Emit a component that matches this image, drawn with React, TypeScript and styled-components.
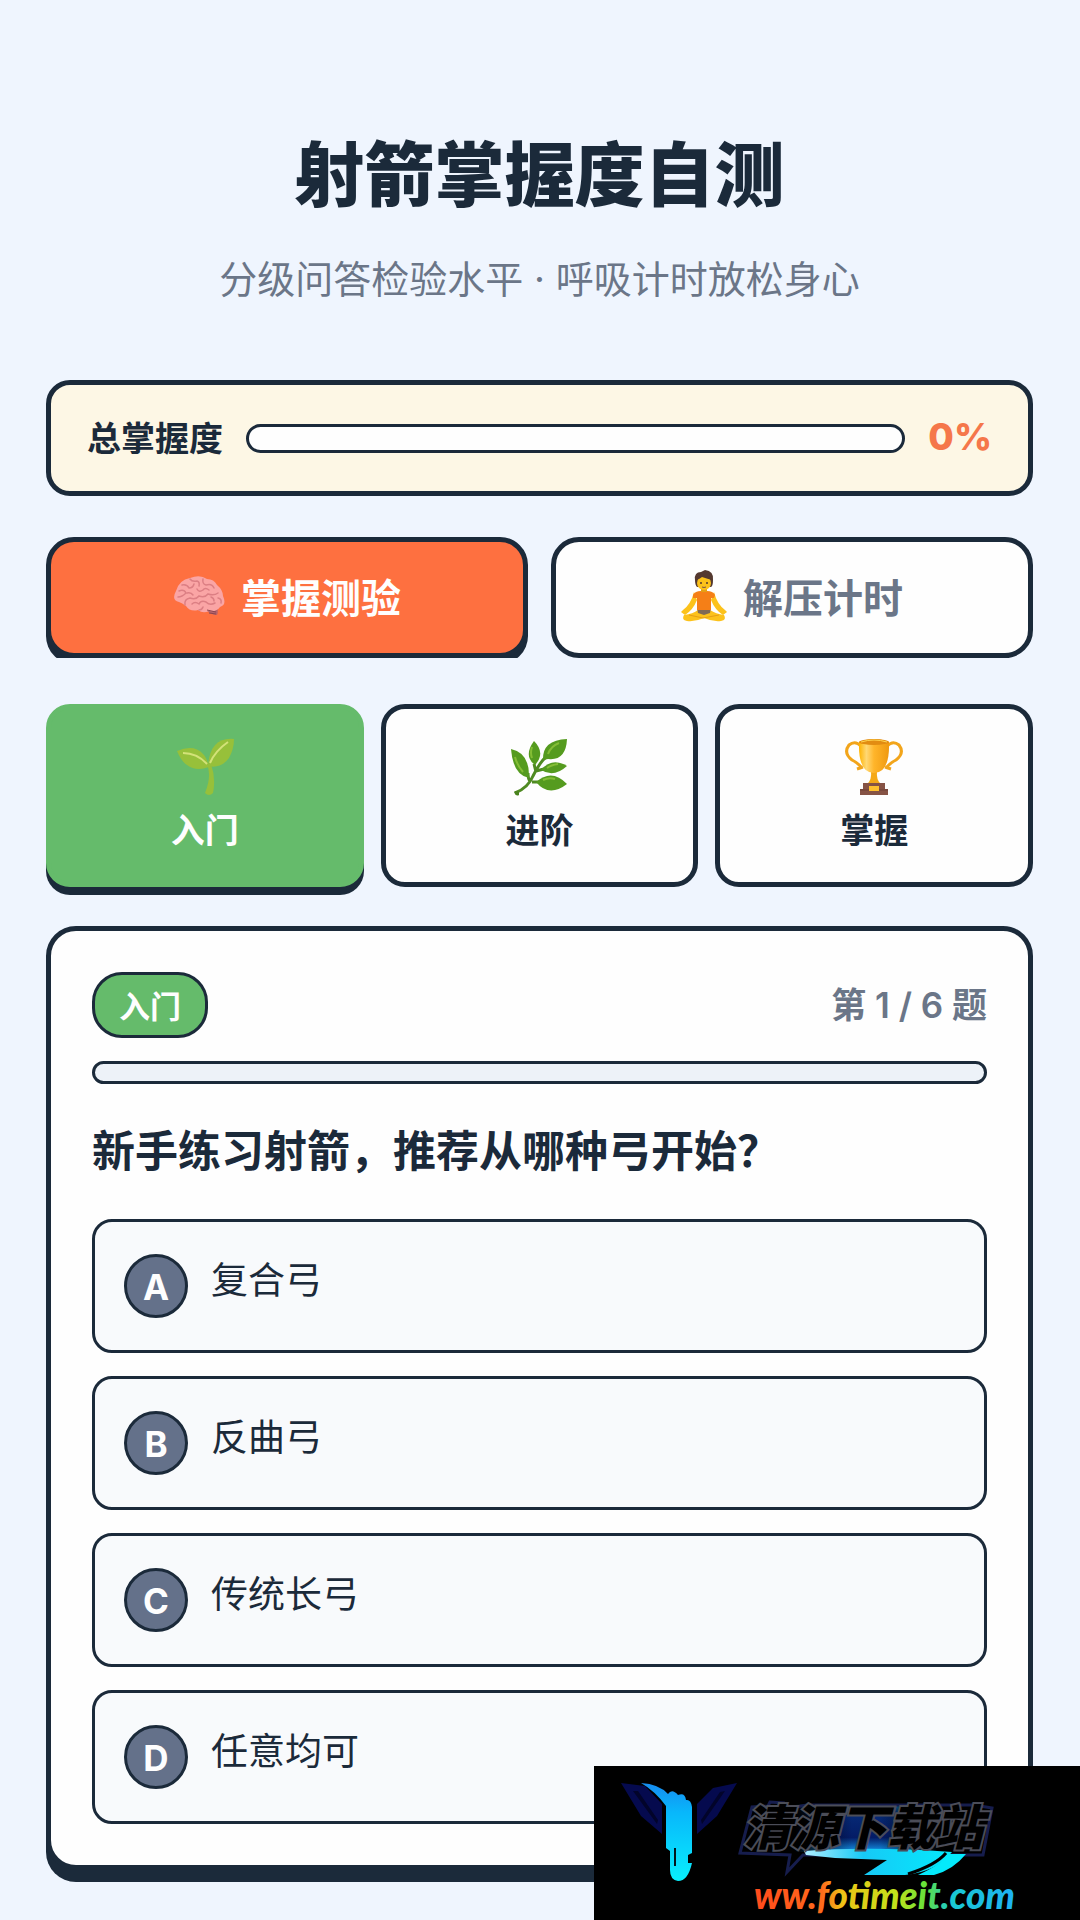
import React, { useState } from "react";
import styled, { createGlobalStyle } from "styled-components";

const LEVELS = [
  { id: "easy", name: "入门", icon: "sprout" },
  { id: "mid", name: "进阶", icon: "herb" },
  { id: "pro", name: "掌握", icon: "trophy" },
];

const OPTIONS = ["复合弓", "反曲弓", "传统长弓", "任意均可"];

function Brain() {
  return (
    <svg width="52" height="40" viewBox="0 0 52 40" aria-hidden="true">
      <path d="M31 31 Q36 39 44 39 Q46 34 43 30 Z" fill="#b5636a" />
      <path d="M3 15 Q6 4 17 2 Q27 -2 34 3 Q41 3 44 9 Q50 14 50 20 Q54 29 47 31 Q44 36 36 35 Q30 38 25 34 Q17 36 13 30 Q9 27 6 26 Q-2 24 3 15 Z" fill="#faa5a5" />
      <g fill="none" stroke="#dc7f84" strokeWidth="1.5" strokeLinecap="round">
        <path d="M6 15 Q11 13 13 17 Q9 21 5 21" />
        <path d="M9 9 Q14 8 16 12 Q20 12 21 8 M17 3 Q19 6 24 5 Q27 6 26 10" />
        <path d="M12 29 Q11 23 17 22 Q23 24 26 20 Q32 22 35 18 Q41 20 45 17" />
        <path d="M30 3 Q29 8 33 9 Q39 7 41 12 M24 13 Q26 17 30 14 Q32 11 36 14" />
        <path d="M19 28 Q22 25 26 28 Q28 24 33 26 Q37 30 42 27 M38 21 Q41 22 41 25" />
        <path d="M14 17 Q18 16 20 19 M45 22 Q49 23 48 27 M26 34 Q29 34 30 31" />
      </g>
      <path d="M34 34 L43 36 M36 37 L43 38" stroke="#8a4651" strokeWidth="1" />
    </svg>
  );
}

function Meditate() {
  return (
    <svg width="46" height="52" viewBox="0 0 46 52" aria-hidden="true">
      <path d="M13 22 Q10 34 2 40 L0 42 L4 45 Q12 40 16 30 Z" fill="#fcc21b" />
      <path d="M33 22 Q36 34 44 40 L46 42 L42 45 Q34 40 30 30 Z" fill="#fcc21b" />
      <path d="M3 45 Q12 44 17 40 L29 40 Q35 44 43 45 Q46 50 40 51 Q32 52 23 48 Q14 52 6 51 Q0 50 3 45 Z" fill="#fcc21b" />
      <path d="M8 45 L22 48 L38 45" fill="none" stroke="#e59f14" strokeWidth="1" />
      <path d="M16 38 L30 38 L29 43 L23 45 L17 43 Z" fill="#806a55" />
      <path d="M12 25 Q14 21 20 21 L26 21 Q32 21 34 25 L33 28 L30 28 L30 40 L16 40 L16 28 L12 28 Z" fill="#f57f17" />
      <rect x="20" y="17" width="6" height="5" fill="#e59f14" />
      <path d="M14 10 Q13 2 20 2 L24 0 Q33 1 32 10 Q32 16 30 17 L16 17 Q14 15 14 10 Z" fill="#543930" />
      <ellipse cx="23" cy="13" rx="7" ry="7" fill="#fcc21b" />
      <path d="M15 10 Q19 9 21 7 Q27 9 31 10 L28 4 L18 4 Z" fill="#543930" />
      <circle cx="20" cy="13" r="1" fill="#543930" />
      <circle cx="26" cy="13" r="1" fill="#543930" />
      <path d="M21 17 Q23 18 25 17" stroke="#795548" strokeWidth="1" fill="none" />
    </svg>
  );
}

function LevelIcon({ name }: { name: string }) {
  if (name === "sprout") {
    return (
      <svg width="58" height="58" viewBox="0 0 58 58" aria-hidden="true">
        <path d="M31 26 Q36 38 29 55 Q33 59 37 55 Q40 40 35 26 Z" fill="#97c03a" />
        <path d="M1 13 Q18 6 27 16 Q31 20 33 29 Q20 34 11 27 Q5 23 1 13 Z" fill="#97c03a" />
        <path d="M58 1 Q34 -1 32 28 Q45 31 53 20 Q58 11 58 1 Z" fill="#97c03a" />
        <path d="M7 15 Q21 15 31 26 M34 25 Q39 13 52 4" fill="none" stroke="#d3e278" strokeWidth="2" />
      </svg>
    );
  }
  if (name === "herb") {
    return (
      <svg width="58" height="58" viewBox="0 0 58 58" aria-hidden="true">
        <path d="M5 55 Q18 50 23 38 Q30 24 36 19 M20 43 Q18 41 18 35 M24 26 L26 34 M26 33 L34 31 M22 44 L29 44" fill="none" stroke="#4f8a22" strokeWidth="3" />
        <path d="M4 54 Q6 52 9 54 L9 57 Q6 59 4 54 Z" fill="#4a831e" />
        <g fill="#559b1f">
          <path d="M1 11 Q20 15 19 40 Q3 37 1 11 Z" />
          <path d="M24 3 Q36 15 25 27 Q13 18 24 3 Z" />
          <path d="M57 1 Q56 23 38 21 L33 22 Q32 2 57 1 Z" />
          <path d="M57 28 Q44 40 31 32 Q42 19 57 28 Z" />
          <path d="M57 46 Q39 60 26 44 Q42 30 57 46 Z" />
        </g>
        <path d="M5 19 Q7 27 13 34 M22 9 Q20 15 22 20 M49 5 Q41 8 38 16 M48 26 Q41 27 37 30 M45 41 Q39 39 33 42" fill="none" stroke="#84bd35" strokeWidth="2" />
      </svg>
    );
  }
  return (
    <svg width="58" height="58" viewBox="0 0 58 58" aria-hidden="true">
      <defs>
        <linearGradient id="cup" x1="0" x2="1" y1="0" y2="0">
          <stop offset="0" stopColor="#ffb300" />
          <stop offset="0.25" stopColor="#ffd874" />
          <stop offset="0.5" stopColor="#ffb52a" />
          <stop offset="1" stopColor="#ef9910" />
        </linearGradient>
      </defs>
      <path d="M16 8 Q10 2 4 7 Q-2 15 7 22 Q15 26 17 31 M42 8 Q48 2 54 7 Q60 15 51 22 Q43 26 41 31 M12 31 L18 29 M46 31 L40 29" fill="none" stroke="#f2a51b" strokeWidth="3" />
      <path d="M26 33 L32 33 Q31 42 36 46 L22 46 Q27 42 26 33 Z" fill="#f5a918" />
      <path d="M14 4 Q29 -2 44 4 Q45 35 29 35 Q13 35 14 4 Z" fill="url(#cup)" />
      <ellipse cx="29" cy="4" rx="15" ry="3" fill="#e28c12" />
      <path d="M16 4 Q29 0 42 4" stroke="#ffd54f" strokeWidth="1" fill="none" />
      <path d="M18 45 H40 V51 H43 V57 H15 V51 H18 Z" fill="#865345" />
      <path d="M15 52 H43" stroke="#6d4037" strokeWidth="1" />
      <rect x="24" y="48" width="10" height="5" fill="#ffc02d" />
    </svg>
  );
}

function SiteMark() {
  return (
    <Mark>
      <svg width="116" height="100" viewBox="0 0 116 100" aria-hidden="true">
        <defs>
          <linearGradient id="beam" x1="0" x2="0" y1="0" y2="1">
            <stop offset="0" stopColor="#168bf0" />
            <stop offset="0.3" stopColor="#08b7fb" />
            <stop offset="1" stopColor="#08effd" />
          </linearGradient>
        </defs>
        <path d="M0 1 L24 4 L41 22 V52 L20 34 Z M116 1 L92 6 L76 22 V52 L96 34 Z" fill="#050a4e" />
        <path d="M12 9 L17 9 L37 38 L36 42 Z M104 9 L99 10 L80 38 L81 42 Z" fill="#02042a" />
        <path d="M20 1 Q38 2 47 12 Q51 6 57 13 Q64 10 65 18 Q70 17 71 25 V71 L67 73 V81 H71 Q67 99 57 99 Q49 98 49 88 V69 L45 66 V24 Q34 9 20 1 Z" fill="url(#beam)" />
        <path d="M54 66 V84" stroke="#02151d" strokeWidth="2" />
      </svg>
      <MarkText width="300" height="138" viewBox="0 0 300 138" role="img" aria-label="清源下载站">
        <defs>
          <linearGradient id="glow" x1="0" x2="0" y1="0" y2="1">
            <stop offset="0" stopColor="#0e86b4" />
            <stop offset="0.2" stopColor="#062a76" />
            <stop offset="0.7" stopColor="#041c66" />
            <stop offset="1" stopColor="#1496ea" />
          </linearGradient>
          <linearGradient id="fade" x1="0" x2="1" y1="0" y2="0">
            <stop offset="0" stopColor="#000" stopOpacity="1" />
            <stop offset="0.4" stopColor="#000" stopOpacity="0" />
            <stop offset="0.6" stopColor="#000" stopOpacity="0" />
            <stop offset="1" stopColor="#000" stopOpacity="1" />
          </linearGradient>
          <linearGradient id="swoosh" x1="0" x2="1" y1="0" y2="0">
            <stop offset="0" stopColor="#b0efff" />
            <stop offset="0.4" stopColor="#17c9f6" />
            <stop offset="1" stopColor="#04eafc" />
          </linearGradient>
          <linearGradient id="rainbow" x1="0" x2="1" y1="0" y2="0">
            <stop offset="0" stopColor="#ff4a1c" />
            <stop offset="0.26" stopColor="#ff6a1c" />
            <stop offset="0.34" stopColor="#f0c416" />
            <stop offset="0.55" stopColor="#bfe31c" />
            <stop offset="0.66" stopColor="#63e23c" />
            <stop offset="0.75" stopColor="#19c9d2" />
            <stop offset="1" stopColor="#1eb1f5" />
          </linearGradient>
        </defs>
        <rect x="56" y="22" width="140" height="48" fill="url(#glow)" />
        <rect x="55" y="21" width="142" height="50" fill="url(#fade)" />
        <path d="M0 71 L12 25 L28 24 L30 20 L44 21 L50 26 L67 23 H234 L252 26 L243 73 H63 L47 90 L50 73 Z" fill="none" stroke="#161d4d" strokeWidth="3" />
        <path d="M64 69 Q130 64 212 70 Q196 90 165 93 H124 L147 78 L95 76 L66 73 Z" fill="url(#swoosh)" />
        <path d="M178 93 Q202 82 208 72 L226 72 Q213 88 194 93 Z" fill="#04eafc" />
        <path d="M168 92 Q196 83 206 71" fill="none" stroke="#000" strokeWidth="3" />
        <MarkName x="3" y="63">清源下载站</MarkName>
        <MarkUrl x="14" y="127">ww.fotimeit.com</MarkUrl>
      </MarkText>
    </Mark>
  );
}

function App() {
  const [tab, setTab] = useState("quiz");
  const [level, setLevel] = useState("easy");

  return (
    <>
      <GlobalStyle />
      <Page>
        <Header>
          <h1>射箭掌握度自测</h1>
          <p>分级问答检验水平 · 呼吸计时放松身心</p>
        </Header>

        <Score>
          <ScoreLabel>总掌握度</ScoreLabel>
          <ScoreBar />
          <ScoreValue>0%</ScoreValue>
        </Score>

        <Tabs>
          <Tab type="button" $active={tab === "quiz"} onClick={() => setTab("quiz")}>
            <Brain />
            掌握测验
          </Tab>
          <Tab type="button" $active={tab === "timer"} onClick={() => setTab("timer")}>
            <Meditate />
            解压计时
          </Tab>
        </Tabs>

        <Levels>
          {LEVELS.map((l) => (
            <Level type="button" key={l.id} $active={level === l.id} onClick={() => setLevel(l.id)}>
              <LevelIcon name={l.icon} />
              {l.name}
            </Level>
          ))}
        </Levels>

        <Card>
          <CardTop>
            <Badge>入门</Badge>
            <Count>第 1 / 6 题</Count>
          </CardTop>
          <QuizBar />
          <Question>新手练习射箭，推荐从哪种弓开始？</Question>
          <Options>
            {OPTIONS.map((text, i) => (
              <Option type="button" key={text}>
                <Letter>{"ABCD"[i]}</Letter>
                <span>{text}</span>
              </Option>
            ))}
          </Options>
        </Card>
      </Page>
      <SiteMark />
    </>
  );
}

export default App;

const GlobalStyle = createGlobalStyle`
* {
    box-sizing: border-box;
}
body {
    margin: 0;
    background: #eff5fe;
    color: #1b2a3a;
    font-family: "Noto Sans CJK SC", sans-serif;
}
button {
    font-family: inherit;
    color: inherit;
    cursor: pointer;
}
`;

const Page = styled.main`
    padding: 119px 47px 39px 46px;
`;

const Header = styled.header`
    text-align: center;
    margin-bottom: 74px;
    h1 {
        margin: 0 0 30px;
        font-size: 70px;
        line-height: 104px;
        font-weight: 900;
    }
    p {
        margin: 0;
        font-family: Inter, "Noto Sans CJK SC", sans-serif;
        font-size: 38px;
        line-height: 53px;
        color: #6b7688;
    }
`;

const Score = styled.section`
    display: flex;
    align-items: center;
    gap: 23px;
    height: 116px;
    padding: 0 36px;
    margin-bottom: 41px;
    border: 5px solid #1b2a3a;
    border-radius: 24px;
    background: #fdf7e5;
`;

const ScoreLabel = styled.span`
    padding-bottom: 3px;
    font-size: 34px;
    line-height: 50px;
    font-weight: 700;
`;

const ScoreBar = styled.div`
    flex: 1;
    height: 29px;
    border: 3px solid #1b2a3a;
    border-radius: 15px;
    background: #fefefe;
`;

const ScoreValue = styled.span`
    padding-bottom: 3px;
    font-family: Inter, sans-serif;
    font-size: 37px;
    line-height: 50px;
    font-weight: 800;
    color: #f5774a;
`;

/* overflow cuts the shadow of the active tab */
const Tabs = styled.nav`
    display: grid;
    grid-template-columns: 1fr 1fr;
    gap: 23px;
    margin-bottom: 46px;
    overflow: hidden;
`;

const Tab = styled.button<{ $active: boolean }>`
    display: flex;
    align-items: center;
    justify-content: center;
    gap: 16px;
    height: 121px;
    padding: 0 0 4px;
    border: 5px solid #1b2a3a;
    border-radius: 28px;
    font-size: 40px;
    font-weight: 700;
    background: ${(p) => (p.$active ? "#fe7040" : "#fefefe")};
    color: ${(p) => (p.$active ? "#fefefe" : "#6b7688")};
    box-shadow: ${(p) => (p.$active ? "0 6px 0 #1b2a3a" : "none")};
`;

const Levels = styled.div`
    display: grid;
    grid-template-columns: repeat(3, 1fr);
    gap: 17px;
    margin-bottom: 39px;
`;

const Level = styled.button<{ $active: boolean }>`
    display: flex;
    flex-direction: column;
    align-items: center;
    gap: 8px;
    height: 183px;
    padding: 29px 0 0;
    border: 5px solid ${(p) => (p.$active ? "#65bb6b" : "#1b2a3a")};
    border-radius: 24px;
    font-size: 34px;
    line-height: 50px;
    font-weight: 700;
    background: ${(p) => (p.$active ? "#65bb6b" : "#fefefe")};
    color: ${(p) => (p.$active ? "#fefefe" : "#1b2a3a")};
    box-shadow: ${(p) => (p.$active ? "0 8px 0 #1b2a3a" : "none")};
`;

const Card = styled.section`
    padding: 41px;
    border: 5px solid #1b2a3a;
    border-radius: 30px;
    background: #fefefe;
    box-shadow: 0 12px 0 #1b2a3a;
`;

const CardTop = styled.div`
    display: flex;
    align-items: center;
    justify-content: space-between;
    margin-bottom: 23px;
`;

const Badge = styled.span`
    padding: 0 24px;
    border: 3px solid #1b2a3a;
    border-radius: 30px;
    font-size: 31px;
    line-height: 60px;
    font-weight: 700;
    color: #fefefe;
    background: #65bb6b;
`;

const Count = styled.span`
    font-family: Inter, "Noto Sans CJK SC", sans-serif;
    font-size: 35px;
    line-height: 50px;
    font-weight: 600;
    color: #6b7688;
`;

const QuizBar = styled.div`
    height: 23px;
    margin-bottom: 32px;
    border: 3px solid #1b2a3a;
    border-radius: 12px;
    background: #edf2f8;
`;

const Question = styled.h2`
    margin: 0 0 39px;
    font-size: 43px;
    line-height: 64px;
    font-weight: 700;
`;

const Options = styled.div`
    display: grid;
    gap: 23px;
`;

const Option = styled.button`
    display: flex;
    align-items: flex-start;
    gap: 23px;
    height: 134px;
    padding: 32px 29px;
    border: 3px solid #1b2a3a;
    border-radius: 20px;
    font-size: 37px;
    line-height: 48px;
    text-align: left;
    background: #f8fafc;
`;

const Letter = styled.b`
    width: 64px;
    height: 64px;
    border: 3px solid #1b2a3a;
    border-radius: 50%;
    font-family: Inter, sans-serif;
    font-size: 35px;
    line-height: 60px;
    text-align: center;
    color: #fefefe;
    background: #64718a;
`;

const Mark = styled.aside`
    position: fixed;
    right: 0;
    bottom: 0;
    display: flex;
    gap: 3px;
    width: 486px;
    height: 154px;
    padding: 16px 0 0 27px;
    background: #000;
`;

const MarkText = styled.svg`
    overflow: visible;
`;

const MarkName = styled.text`
    font-size: 48px;
    font-weight: 900;
    font-style: italic;
    fill: #000;
    stroke: #4b4d58;
    stroke-width: 4px;
    paint-order: stroke;
`;

const MarkUrl = styled.text`
    font-family: Lato, sans-serif;
    font-size: 37px;
    font-weight: 900;
    font-style: italic;
    fill: url(#rainbow);
`;
